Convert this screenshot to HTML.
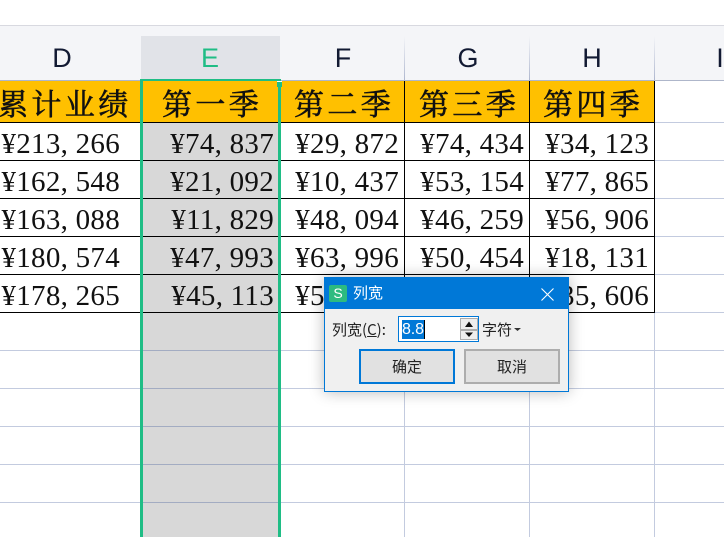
<!DOCTYPE html>
<html lang="zh"><head><meta charset="utf-8"><title>列宽</title>
<style>
html,body{margin:0;padding:0;background:#fff}
#p{position:relative;width:724px;height:537px;overflow:hidden;background:#fff;font-family:"Liberation Sans","Noto Sans CJK SC",sans-serif}
#p div{position:absolute}
.h{top:41px;height:34px;line-height:34px;font-size:27px;text-align:center;color:#121a33}
.t{top:81px;height:41px;line-height:42px;font-family:"Noto Serif CJK SC",serif;font-weight:400;-webkit-text-stroke:.6px #111;font-size:30px;letter-spacing:3.4px;color:#111;white-space:nowrap}
.n{height:36px;line-height:36px;font-family:"Liberation Serif",serif;font-size:29px;letter-spacing:.3px;text-align:right;color:#111;white-space:nowrap}
.n i{font-style:normal;margin-right:7.4px}
.bk{background:#000}.gl{background:#c3cbdf}
.d{font-family:"Noto Sans CJK SC","Liberation Sans",sans-serif;font-size:15px;color:#222;white-space:nowrap}
</style></head><body><div id="p">
<div style="left:0;top:25px;width:724px;height:1px;background:#d8d9e0"></div>
<div style="left:0;top:26px;width:724px;height:54px;background:#f4f5f8"></div>
<div style="left:141px;top:36px;width:139px;height:44px;background:#e1e3e8"></div>
<div style="left:404px;top:36px;width:1px;height:44px;background:linear-gradient(#f4f5f8,#aeb7cf)"></div>
<div style="left:529px;top:36px;width:1px;height:44px;background:linear-gradient(#f4f5f8,#aeb7cf)"></div>
<div style="left:654px;top:36px;width:1px;height:44px;background:linear-gradient(#f4f5f8,#aeb7cf)"></div>
<div style="left:0;top:80px;width:724px;height:1px;background:#aeb6ca"></div>
<div class="h" style="left:22px;width:80px">D</div>
<div class="h" style="left:170px;width:80px;color:#1fbd85">E</div>
<div class="h" style="left:303px;width:80px">F</div>
<div class="h" style="left:428px;width:80px">G</div>
<div class="h" style="left:552px;width:80px">H</div>
<div class="h" style="left:680px;width:80px">I</div>

<div style="left:0;top:81px;width:654px;height:41px;background:#ffc000"></div>
<div style="left:143px;top:122px;width:135px;height:415px;background:#d8d8d8"></div>

<div class="gl" style="left:654px;top:122px;width:70px;height:1px"></div>
<div class="gl" style="left:654px;top:160px;width:70px;height:1px"></div>
<div class="gl" style="left:654px;top:198px;width:70px;height:1px"></div>
<div class="gl" style="left:654px;top:236px;width:70px;height:1px"></div>
<div class="gl" style="left:654px;top:274px;width:70px;height:1px"></div>
<div class="gl" style="left:654px;top:312px;width:70px;height:1px"></div>
<div class="gl" style="left:0;top:350px;width:724px;height:1px"></div>
<div class="gl" style="left:0;top:388px;width:724px;height:1px"></div>
<div class="gl" style="left:0;top:426px;width:724px;height:1px"></div>
<div class="gl" style="left:0;top:464px;width:724px;height:1px"></div>
<div class="gl" style="left:0;top:502px;width:724px;height:1px"></div>
<div style="left:143px;top:350px;width:135px;height:1px;background:#a3acc2"></div>
<div style="left:143px;top:388px;width:135px;height:1px;background:#a3acc2"></div>
<div style="left:143px;top:426px;width:135px;height:1px;background:#a3acc2"></div>
<div style="left:143px;top:464px;width:135px;height:1px;background:#a3acc2"></div>
<div style="left:143px;top:502px;width:135px;height:1px;background:#a3acc2"></div>
<div class="gl" style="left:404px;top:313px;width:1px;height:224px"></div>
<div class="gl" style="left:529px;top:313px;width:1px;height:224px"></div>
<div class="gl" style="left:654px;top:313px;width:1px;height:224px"></div>

<div class="bk" style="left:0;top:122px;width:655px;height:1px"></div>
<div class="bk" style="left:0;top:160px;width:655px;height:1px"></div>
<div class="bk" style="left:0;top:198px;width:655px;height:1px"></div>
<div class="bk" style="left:0;top:236px;width:655px;height:1px"></div>
<div class="bk" style="left:0;top:274px;width:655px;height:1px"></div>
<div class="bk" style="left:0;top:312px;width:655px;height:1px"></div>
<div class="bk" style="left:404px;top:81px;width:1px;height:232px"></div>
<div class="bk" style="left:529px;top:81px;width:1px;height:232px"></div>
<div class="bk" style="left:654px;top:81px;width:1px;height:232px"></div>

<div class="t" style="left:-2px">累计业绩</div>
<div class="t" style="left:162px">第一季</div>
<div class="t" style="left:294px">第二季</div>
<div class="t" style="left:419px">第三季</div>
<div class="t" style="left:543px">第四季</div>

<div class="n" style="left:0;width:120px;top:126px">¥213,<i></i>266</div>
<div class="n" style="left:0;width:120px;top:164px">¥162,<i></i>548</div>
<div class="n" style="left:0;width:120px;top:202px">¥163,<i></i>088</div>
<div class="n" style="left:0;width:120px;top:240px">¥180,<i></i>574</div>
<div class="n" style="left:0;width:120px;top:278px">¥178,<i></i>265</div>
<div class="n" style="left:144px;width:130px;top:126px">¥74,<i></i>837</div>
<div class="n" style="left:144px;width:130px;top:164px">¥21,<i></i>092</div>
<div class="n" style="left:144px;width:130px;top:202px">¥11,<i></i>829</div>
<div class="n" style="left:144px;width:130px;top:240px">¥47,<i></i>993</div>
<div class="n" style="left:144px;width:130px;top:278px">¥45,<i></i>113</div>
<div class="n" style="left:282px;width:117px;top:126px">¥29,<i></i>872</div>
<div class="n" style="left:282px;width:117px;top:164px">¥10,<i></i>437</div>
<div class="n" style="left:282px;width:117px;top:202px">¥48,<i></i>094</div>
<div class="n" style="left:282px;width:117px;top:240px">¥63,<i></i>996</div>
<div class="n" style="left:282px;width:117px;top:278px">¥50,<i></i>318</div>
<div class="n" style="left:406px;width:118px;top:126px">¥74,<i></i>434</div>
<div class="n" style="left:406px;width:118px;top:164px">¥53,<i></i>154</div>
<div class="n" style="left:406px;width:118px;top:202px">¥46,<i></i>259</div>
<div class="n" style="left:406px;width:118px;top:240px">¥50,<i></i>454</div>
<div class="n" style="left:531px;width:118px;top:126px">¥34,<i></i>123</div>
<div class="n" style="left:531px;width:118px;top:164px">¥77,<i></i>865</div>
<div class="n" style="left:531px;width:118px;top:202px">¥56,<i></i>906</div>
<div class="n" style="left:531px;width:118px;top:240px">¥18,<i></i>131</div>
<div class="n" style="left:531px;width:118px;top:278px">¥35,<i></i>606</div>

<div style="left:141px;top:79px;width:140px;height:2px;background:#1fbd85"></div>
<div style="left:140px;top:79px;width:3px;height:458px;background:#1fbd85"></div>
<div style="left:278px;top:79px;width:3px;height:458px;background:#1fbd85"></div>
<div style="left:277px;top:81px;width:5px;height:6px;background:#1fbd85;border-top:1px solid #fff;box-sizing:border-box"></div>

<div style="left:324px;top:277px;width:245px;height:115px;background:#f0f0f0;box-shadow:0 0 14px rgba(0,0,0,.28);border:1px solid #0078d7;box-sizing:border-box"></div>
<div style="left:324px;top:277px;width:245px;height:32px;background:#0078d7"></div>
<div style="left:329px;top:285px;width:18px;height:17px;border-radius:2px;background:#2dbb80;color:#fff;font-size:14px;line-height:17px;text-align:center">S</div>
<div class="d" style="left:353px;top:283px;height:20px;line-height:20px;color:#fff">列宽</div>
<svg style="position:absolute;left:541px;top:288px" width="13" height="13" viewBox="0 0 13 13"><path d="M.5 .5L12.5 12.5M12.5 .5L.5 12.5" stroke="#fff" stroke-width="1.1" fill="none"/></svg>
<div class="d" style="left:332px;top:320px;height:20px;line-height:20px">列宽(<span style="text-decoration:underline">C</span>):</div>
<div style="left:398px;top:316px;width:81px;height:26px;background:#fff;border:1px solid #0078d7;box-sizing:border-box"></div>
<div style="left:402px;top:320px;width:22px;height:19px;background:#0078d7;color:#fff;font-size:16px;line-height:19px;letter-spacing:-.1px">8.8</div>
<div style="left:424px;top:320px;width:1px;height:19px;background:#000"></div>
<div style="left:460px;top:318px;width:18px;height:12px;background:#eee;border:1px solid #adadad;box-sizing:border-box"></div>
<div style="left:460px;top:330px;width:18px;height:10px;background:#eee;border:1px solid #adadad;box-sizing:border-box"></div>
<svg style="position:absolute;left:464px;top:320px" width="10" height="20" viewBox="0 0 10 20"><path d="M5 1.500L9 7H1Z M1 12.500H9L5 17Z" fill="#111"/></svg>
<div class="d" style="left:482px;top:320px;height:20px;line-height:20px">字符</div>
<svg style="position:absolute;left:514px;top:328px" width="7" height="4" viewBox="0 0 7 4"><path d="M0 0H7L3.500 3Z" fill="#333"/></svg>
<div class="d" style="left:359px;top:349px;width:96px;height:35px;line-height:31px;text-align:center;background:#e1e1e1;border:2px solid #0078d7;box-sizing:border-box">确定</div>
<div class="d" style="left:464px;top:349px;width:96px;height:35px;line-height:31px;text-align:center;background:#e1e1e1;border:2px solid #adadad;box-sizing:border-box">取消</div>
</div></body></html>
